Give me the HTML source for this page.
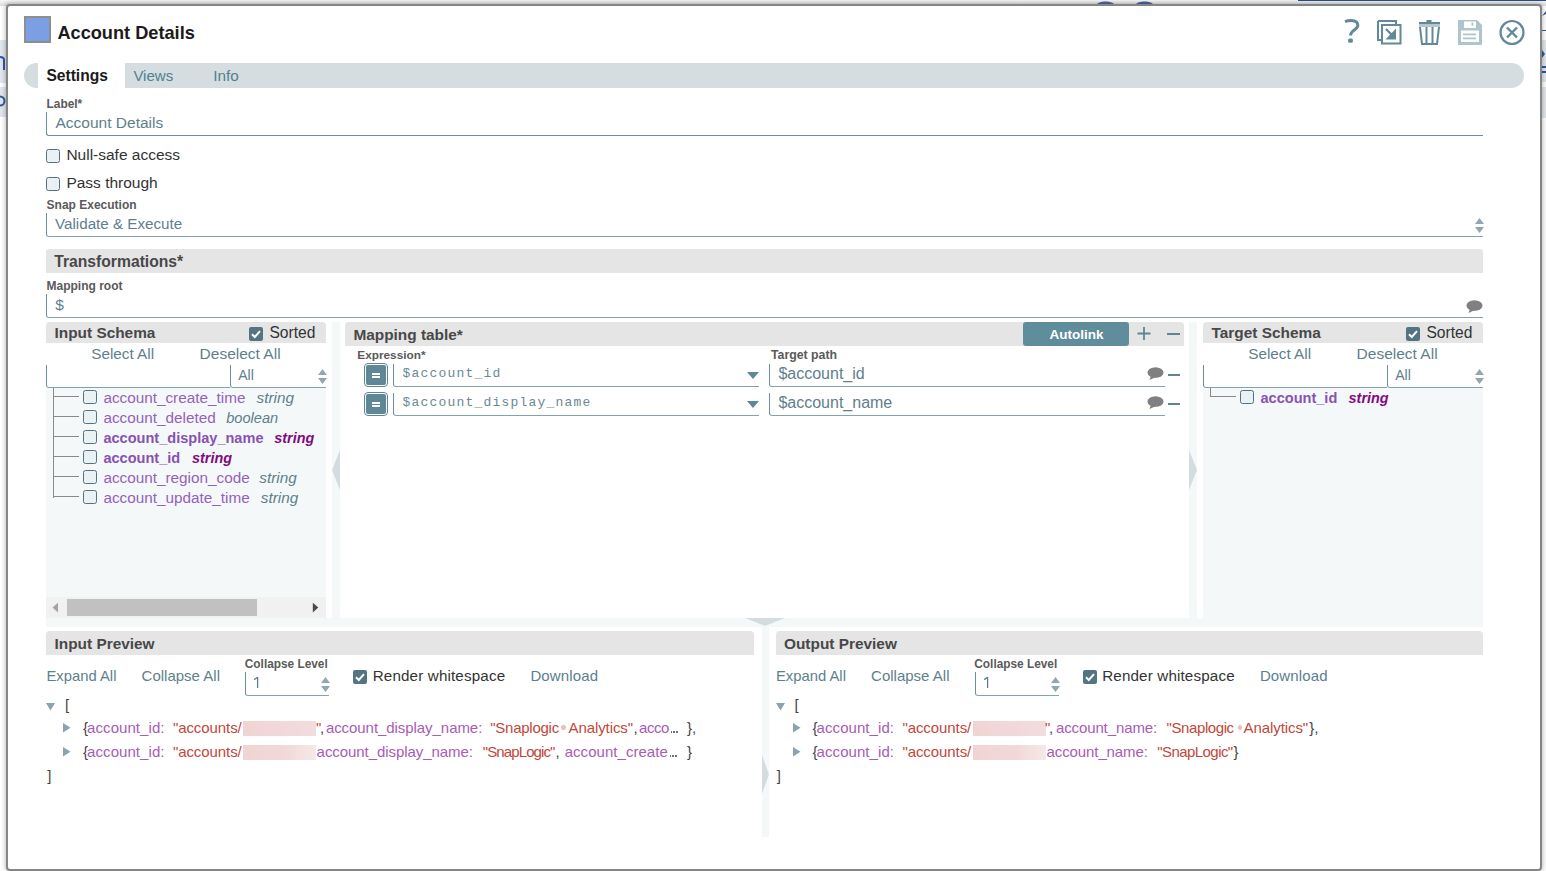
<!DOCTYPE html><html><head><meta charset="utf-8"><style>
html,body{margin:0;padding:0;}
body{width:1546px;height:871px;position:relative;overflow:hidden;background:#ffffff;font-family:"Liberation Sans",sans-serif;}
.t{position:absolute;white-space:pre;line-height:1;}
.r{position:absolute;box-sizing:border-box;}
</style></head><body>
<div class="r" style="left:0px;top:0px;width:1546px;height:6px;background:linear-gradient(#f6f6f6,#dcdcdc)"></div>
<div class="r" style="left:0px;top:40px;width:6px;height:43px;background:#e1e6ec"></div>
<div class="r" style="left:0px;top:87px;width:6px;height:30px;background:#e1e6ec"></div>
<svg class="r" style="left:0px;top:54px;" width="6" height="17" viewBox="0 0 6 17"><path d="M-4 16 V6 C-4 2, 4 2, 4 6 V16" fill="none" stroke="#2a5aa6" stroke-width="2"/></svg>
<svg class="r" style="left:0px;top:92px;" width="6" height="16" viewBox="0 0 6 16"><circle cx="0" cy="9" r="4.5" fill="none" stroke="#2a5aa6" stroke-width="2"/></svg>
<svg class="r" style="left:1094px;top:0px;" width="64" height="6" viewBox="0 0 64 6"><path d="M2 5.5 C4 0, 19 0, 21 5.5Z" fill="#3a4f8e" opacity="0.85"/><path d="M41 5.5 C43 0, 58 0, 60 5.5Z" fill="#27508f" opacity="0.85"/></svg>
<div class="r" style="left:1298px;top:0px;width:248px;height:1px;background:#2c4f8a"></div>
<div class="r" style="left:1542px;top:30px;width:4px;height:1px;background:#2c5aa0"></div>
<div class="r" style="left:1542px;top:40px;width:4px;height:42px;background:#e3e7ec"></div>
<div class="r" style="left:1542px;top:87px;width:4px;height:31px;background:#e3e7ec"></div>
<svg class="r" style="left:1542px;top:11px;" width="4" height="6" viewBox="0 0 4 6"><path d="M0 5 L4 0 V3Z" fill="#2c5aa0"/></svg>
<svg class="r" style="left:1542px;top:50px;" width="4" height="8" viewBox="0 0 4 8"><path d="M0 0 L3 4 L0 8Z" fill="#2c5aa0"/></svg>
<div class="r" style="left:1542px;top:66px;width:4px;height:2px;background:#2c5aa0"></div>
<div class="r" style="left:1542px;top:71px;width:4px;height:2px;background:#2c5aa0"></div>
<div class="r" style="left:6px;top:4px;width:1536px;height:867px;background:#fff;border:2px solid #858585;border-radius:4px;box-shadow:0 0 4px 1px rgba(0,0,0,0.25)"></div>
<div class="r" style="left:24px;top:16px;width:27px;height:27px;background:#7a9fe3;border:2px solid #8e8e8e"></div>
<div class="t" style="left:57.4px;top:24.0px;font-size:18.2px;color:#1b1b1b;font-weight:700;font-style:normal;letter-spacing:0px;font-family:'Liberation Sans', sans-serif;">Account Details</div>
<svg class="r" style="left:1340px;top:15.8px;" width="24" height="30" viewBox="0 0 24 30"><path d="M5 5.6 C8 4.4, 12 4.2, 14.5 5 C17.5 6, 18.2 8.5, 17.6 10.5 C17 12.5, 14 14, 12.5 15.5 C11 17, 10.5 18, 10.5 19.5" fill="none" stroke="#628998" stroke-width="3"/><rect x="8.1" y="22.5" width="4.8" height="4.3" rx="1.6" fill="#628998"/></svg>
<svg class="r" style="left:1376px;top:19px;" width="27" height="27" viewBox="0 0 27 27"><path d="M2 2 H20 V6" fill="none" stroke="#628998" stroke-width="2"/><path d="M2 2 V21 H5" fill="none" stroke="#628998" stroke-width="2"/>
<rect x="6" y="6" width="18.5" height="18.5" fill="none" stroke="#628998" stroke-width="2"/>
<path d="M10 10 L15.5 15.5" stroke="#628998" stroke-width="2.2"/><path d="M20 9.5 V20.5 H9.5 Z" fill="#628998"/></svg>
<svg class="r" style="left:1417px;top:19px;" width="26" height="27" viewBox="0 0 26 27"><rect x="9.5" y="1" width="5" height="3" fill="#628998"/><rect x="2" y="3" width="21" height="2.5" fill="#628998"/><rect x="2" y="5.5" width="21" height="2.5" fill="#b7c8ce"/>
<path d="M3 8 L5 25 H20 L22 8" fill="none" stroke="#628998" stroke-width="2"/><path d="M9.5 8 V24 M15.5 8 V24" stroke="#628998" stroke-width="2"/></svg>
<svg class="r" style="left:1457px;top:19px;" width="27" height="27" viewBox="0 0 27 27"><path d="M1 1 H20 L25 6 V26 H1 Z" fill="#afc4cc"/><rect x="7" y="2.5" width="12" height="6.5" fill="#fff"/><rect x="14.5" y="3.5" width="1.8" height="3.2" fill="#afc4cc"/>
<rect x="4" y="11.5" width="18" height="11.5" fill="#fff"/><rect x="6" y="14.5" width="13" height="1.8" fill="#afc4cc"/><rect x="6" y="18.5" width="13" height="1.8" fill="#afc4cc"/></svg>
<svg class="r" style="left:1498px;top:19px;" width="28" height="28" viewBox="0 0 28 28"><circle cx="14" cy="13.5" r="11.5" fill="none" stroke="#628998" stroke-width="2.2"/><path d="M9 8.5 L19 18.5 M19 8.5 L9 18.5" stroke="#628998" stroke-width="2.4"/></svg>
<div class="r" style="left:24px;top:63px;width:1500px;height:25px;background:#d5dde0;border-radius:12.5px"></div>
<div class="r" style="left:38px;top:63px;width:87px;height:25px;background:#fff"></div>
<div class="t" style="left:46.4px;top:68.0px;font-size:15.6px;color:#1b1b1b;font-weight:700;font-style:normal;letter-spacing:0px;font-family:'Liberation Sans', sans-serif;">Settings</div>
<div class="t" style="left:133.4px;top:68.0px;font-size:15px;color:#4f8093;font-weight:400;font-style:normal;letter-spacing:0px;font-family:'Liberation Sans', sans-serif;">Views</div>
<div class="t" style="left:213.3px;top:68.0px;font-size:15.3px;color:#4f8093;font-weight:400;font-style:normal;letter-spacing:0px;font-family:'Liberation Sans', sans-serif;">Info</div>
<div class="t" style="left:46.5px;top:99.0px;font-size:11.9px;color:#5a5a5a;font-weight:700;font-style:normal;letter-spacing:0px;font-family:'Liberation Sans', sans-serif;">Label*</div>
<div class="r" style="left:46px;top:112px;width:1437px;height:24px;border-left:1px solid #6d8e9a;border-bottom:1px solid #6d8e9a;border-bottom-left-radius:3px"></div>
<div class="t" style="left:55.5px;top:115.0px;font-size:15.5px;color:#5e7f8c;font-weight:400;font-style:normal;letter-spacing:0px;font-family:'Liberation Sans', sans-serif;">Account Details</div>
<div class="r" style="left:46px;top:149px;width:14px;height:14px;background:#e9f1f4;border:1.5px solid #54717d;border-radius:2.5px"></div>
<div class="t" style="left:66.4px;top:147.0px;font-size:15.5px;color:#333;font-weight:400;font-style:normal;letter-spacing:0px;font-family:'Liberation Sans', sans-serif;">Null-safe access</div>
<div class="r" style="left:46px;top:177px;width:14px;height:14px;background:#e9f1f4;border:1.5px solid #54717d;border-radius:2.5px"></div>
<div class="t" style="left:66.4px;top:175.0px;font-size:15.5px;color:#333;font-weight:400;font-style:normal;letter-spacing:0px;font-family:'Liberation Sans', sans-serif;">Pass through</div>
<div class="t" style="left:46.6px;top:199.0px;font-size:12px;color:#5a5a5a;font-weight:700;font-style:normal;letter-spacing:0px;font-family:'Liberation Sans', sans-serif;">Snap Execution</div>
<div class="r" style="left:46px;top:213px;width:1437px;height:24px;border-left:1px solid #6d8e9a;border-bottom:1px solid #86a2ad;border-bottom-left-radius:3px"></div>
<div class="t" style="left:55.0px;top:216.0px;font-size:15.2px;color:#5e7f8c;font-weight:400;font-style:normal;letter-spacing:0px;font-family:'Liberation Sans', sans-serif;">Validate &amp; Execute</div>
<svg class="r" style="left:1474.5px;top:217.5px;" width="9" height="16" viewBox="0 0 9 16"><path d="M4.5 0 L9 6 H0Z M0 9 H9 L4.5 15Z" fill="#8fa8b0"/></svg>
<div class="r" style="left:46px;top:249px;width:1437px;height:24px;background:#e5e5e5;border-radius:3px 3px 0 0"></div>
<div class="t" style="left:54.2px;top:254.0px;font-size:15.7px;color:#484848;font-weight:700;font-style:normal;letter-spacing:0px;font-family:'Liberation Sans', sans-serif;">Transformations*</div>
<div class="t" style="left:46.5px;top:280.0px;font-size:12px;color:#5a5a5a;font-weight:700;font-style:normal;letter-spacing:0px;font-family:'Liberation Sans', sans-serif;">Mapping root</div>
<div class="r" style="left:46px;top:294px;width:1437px;height:24px;border-left:1px solid #6d8e9a;border-bottom:1px solid #86a2ad;border-bottom-left-radius:3px"></div>
<div class="t" style="left:55.3px;top:297.0px;font-size:15.5px;color:#5e7f8c;font-weight:400;font-style:normal;letter-spacing:0px;font-family:'Liberation Sans', sans-serif;">$</div>
<svg class="r" style="left:1466px;top:300px;" width="17" height="14" viewBox="0 0 17 14"><ellipse cx="8.5" cy="5.5" rx="8" ry="5.3" fill="#808080"/><path d="M4 9 L2.5 13 L9 10Z" fill="#808080"/></svg>
<div class="r" style="left:46px;top:322px;width:280px;height:21px;background:#e5e5e5;border-radius:4px 4px 0 0"></div>
<div class="t" style="left:54.5px;top:325.0px;font-size:15.4px;color:#484848;font-weight:700;font-style:normal;letter-spacing:0px;font-family:'Liberation Sans', sans-serif;">Input Schema</div>
<div class="r" style="left:249px;top:327px;width:14px;height:14px;background:#557482;border-radius:2px"></div>
<svg class="r" style="left:249px;top:327px;" width="14" height="14" viewBox="0 0 14 14"><path d="M3 7.2 L5.8 10 L11 4.2" fill="none" stroke="#fff" stroke-width="2"/></svg>
<div class="t" style="left:269.4px;top:325.0px;font-size:15.6px;color:#333;font-weight:400;font-style:normal;letter-spacing:0px;font-family:'Liberation Sans', sans-serif;">Sorted</div>
<div class="t" style="left:91.2px;top:346.0px;font-size:15.3px;color:#5e7f8c;font-weight:400;font-style:normal;letter-spacing:0px;font-family:'Liberation Sans', sans-serif;">Select All</div>
<div class="t" style="left:199.6px;top:346.0px;font-size:15.5px;color:#5e7f8c;font-weight:400;font-style:normal;letter-spacing:0px;font-family:'Liberation Sans', sans-serif;">Deselect All</div>
<div class="r" style="left:46px;top:365px;width:184px;height:23px;border-left:1px solid #6d8e9a;border-bottom:1px solid #86a2ad;border-bottom-left-radius:3px"></div>
<div class="r" style="left:230px;top:365px;width:96px;height:23px;border-left:1px solid #6d8e9a;border-bottom:1px solid #86a2ad;border-bottom-left-radius:3px"></div>
<div class="t" style="left:238.2px;top:368.0px;font-size:14px;color:#5e7f8c;font-weight:400;font-style:normal;letter-spacing:0px;font-family:'Liberation Sans', sans-serif;">All</div>
<svg class="r" style="left:317.5px;top:368.5px;" width="9" height="16" viewBox="0 0 9 16"><path d="M4.5 0 L9 6 H0Z M0 9 H9 L4.5 15Z" fill="#8fa8b0"/></svg>
<div class="r" style="left:46px;top:388px;width:280px;height:230px;background:#f5f8f9"></div>
<div class="r" style="left:1203px;top:322px;width:280px;height:21px;background:#e5e5e5;border-radius:4px 4px 0 0"></div>
<div class="t" style="left:1211.5px;top:325.0px;font-size:15.4px;color:#484848;font-weight:700;font-style:normal;letter-spacing:0px;font-family:'Liberation Sans', sans-serif;">Target Schema</div>
<div class="r" style="left:1406px;top:327px;width:14px;height:14px;background:#557482;border-radius:2px"></div>
<svg class="r" style="left:1406px;top:327px;" width="14" height="14" viewBox="0 0 14 14"><path d="M3 7.2 L5.8 10 L11 4.2" fill="none" stroke="#fff" stroke-width="2"/></svg>
<div class="t" style="left:1426.4px;top:325.0px;font-size:15.6px;color:#333;font-weight:400;font-style:normal;letter-spacing:0px;font-family:'Liberation Sans', sans-serif;">Sorted</div>
<div class="t" style="left:1248.2px;top:346.0px;font-size:15.3px;color:#5e7f8c;font-weight:400;font-style:normal;letter-spacing:0px;font-family:'Liberation Sans', sans-serif;">Select All</div>
<div class="t" style="left:1356.6px;top:346.0px;font-size:15.5px;color:#5e7f8c;font-weight:400;font-style:normal;letter-spacing:0px;font-family:'Liberation Sans', sans-serif;">Deselect All</div>
<div class="r" style="left:1203px;top:365px;width:184px;height:23px;border-left:1px solid #6d8e9a;border-bottom:1px solid #86a2ad;border-bottom-left-radius:3px"></div>
<div class="r" style="left:1387px;top:365px;width:96px;height:23px;border-left:1px solid #6d8e9a;border-bottom:1px solid #86a2ad;border-bottom-left-radius:3px"></div>
<div class="t" style="left:1395.2px;top:368.0px;font-size:14px;color:#5e7f8c;font-weight:400;font-style:normal;letter-spacing:0px;font-family:'Liberation Sans', sans-serif;">All</div>
<svg class="r" style="left:1474.5px;top:368.5px;" width="9" height="16" viewBox="0 0 9 16"><path d="M4.5 0 L9 6 H0Z M0 9 H9 L4.5 15Z" fill="#8fa8b0"/></svg>
<div class="r" style="left:1203px;top:388px;width:280px;height:230px;background:#f5f8f9"></div>
<div class="r" style="left:53px;top:388px;width:1px;height:110px;background:#8a8a8a"></div>
<div class="r" style="left:53px;top:396px;width:26px;height:1px;background:#8a8a8a"></div>
<div class="r" style="left:83px;top:390px;width:14px;height:14px;background:#e9f1f4;border:1.5px solid #54717d;border-radius:2.5px"></div>
<div class="t" style="left:103.4px;top:390.0px;font-size:15.3px;color:#9462b9;font-weight:400;font-style:normal;letter-spacing:0px;font-family:'Liberation Sans', sans-serif;">account_create_time</div>
<div class="t" style="left:256.5px;top:390.0px;font-size:15.3px;color:#5e7f8c;font-weight:400;font-style:italic;letter-spacing:0px;font-family:'Liberation Sans', sans-serif;">string</div>
<div class="r" style="left:53px;top:416px;width:26px;height:1px;background:#8a8a8a"></div>
<div class="r" style="left:83px;top:410px;width:14px;height:14px;background:#e9f1f4;border:1.5px solid #54717d;border-radius:2.5px"></div>
<div class="t" style="left:103.4px;top:410.0px;font-size:15.3px;color:#9462b9;font-weight:400;font-style:normal;letter-spacing:0px;font-family:'Liberation Sans', sans-serif;">account_deleted</div>
<div class="t" style="left:226.2px;top:411.0px;font-size:14.6px;color:#5e7f8c;font-weight:400;font-style:italic;letter-spacing:0px;font-family:'Liberation Sans', sans-serif;">boolean</div>
<div class="r" style="left:53px;top:436px;width:26px;height:1px;background:#8a8a8a"></div>
<div class="r" style="left:83px;top:430px;width:14px;height:14px;background:#e9f1f4;border:1.5px solid #54717d;border-radius:2.5px"></div>
<div class="t" style="left:103.4px;top:431.0px;font-size:14.55px;color:#8753b1;font-weight:700;font-style:normal;letter-spacing:0px;font-family:'Liberation Sans', sans-serif;">account_display_name</div>
<div class="t" style="left:274.3px;top:431.0px;font-size:14.4px;color:#820a82;font-weight:700;font-style:italic;letter-spacing:0px;font-family:'Liberation Sans', sans-serif;">string</div>
<div class="r" style="left:53px;top:456px;width:26px;height:1px;background:#8a8a8a"></div>
<div class="r" style="left:83px;top:450px;width:14px;height:14px;background:#e9f1f4;border:1.5px solid #54717d;border-radius:2.5px"></div>
<div class="t" style="left:103.4px;top:451.0px;font-size:14.55px;color:#8753b1;font-weight:700;font-style:normal;letter-spacing:0px;font-family:'Liberation Sans', sans-serif;">account_id</div>
<div class="t" style="left:192.0px;top:451.0px;font-size:14.4px;color:#820a82;font-weight:700;font-style:italic;letter-spacing:0px;font-family:'Liberation Sans', sans-serif;">string</div>
<div class="r" style="left:53px;top:476px;width:26px;height:1px;background:#8a8a8a"></div>
<div class="r" style="left:83px;top:470px;width:14px;height:14px;background:#e9f1f4;border:1.5px solid #54717d;border-radius:2.5px"></div>
<div class="t" style="left:103.4px;top:470.0px;font-size:15.3px;color:#9462b9;font-weight:400;font-style:normal;letter-spacing:0px;font-family:'Liberation Sans', sans-serif;">account_region_code</div>
<div class="t" style="left:259.3px;top:470.0px;font-size:15.3px;color:#5e7f8c;font-weight:400;font-style:italic;letter-spacing:0px;font-family:'Liberation Sans', sans-serif;">string</div>
<div class="r" style="left:53px;top:496px;width:26px;height:1px;background:#8a8a8a"></div>
<div class="r" style="left:83px;top:490px;width:14px;height:14px;background:#e9f1f4;border:1.5px solid #54717d;border-radius:2.5px"></div>
<div class="t" style="left:103.4px;top:490.0px;font-size:15.3px;color:#9462b9;font-weight:400;font-style:normal;letter-spacing:0px;font-family:'Liberation Sans', sans-serif;">account_update_time</div>
<div class="t" style="left:260.8px;top:490.0px;font-size:15.3px;color:#5e7f8c;font-weight:400;font-style:italic;letter-spacing:0px;font-family:'Liberation Sans', sans-serif;">string</div>
<div class="r" style="left:46px;top:597px;width:280px;height:21px;background:#f1f1f1"></div>
<div class="r" style="left:67px;top:599px;width:190px;height:17px;background:#c1c1c1"></div>
<svg class="r" style="left:52px;top:602px;" width="7" height="11" viewBox="0 0 7 11"><path d="M6 0.7 V10.5 L0.5 5.6Z" fill="#a3a3a3"/></svg>
<svg class="r" style="left:312px;top:602px;" width="7" height="11" viewBox="0 0 7 11"><path d="M0.8 0.7 V10.5 L6.3 5.6Z" fill="#4a4a4a"/></svg>
<div class="r" style="left:1210px;top:388px;width:1px;height:9px;background:#8a8a8a"></div>
<div class="r" style="left:1210px;top:396px;width:26px;height:1px;background:#8a8a8a"></div>
<div class="r" style="left:1240px;top:390px;width:14px;height:14px;background:#e9f1f4;border:1.5px solid #54717d;border-radius:2.5px"></div>
<div class="t" style="left:1260.5px;top:391.0px;font-size:14.55px;color:#8753b1;font-weight:700;font-style:normal;letter-spacing:0px;font-family:'Liberation Sans', sans-serif;">account_id</div>
<div class="t" style="left:1348.6px;top:391.0px;font-size:14.4px;color:#820a82;font-weight:700;font-style:italic;letter-spacing:0px;font-family:'Liberation Sans', sans-serif;">string</div>
<div class="r" style="left:332px;top:322px;width:8px;height:296px;background:#f5f8f9"></div>
<svg class="r" style="left:332px;top:450px;" width="8" height="40" viewBox="0 0 8 40"><path d="M8 0 V40 L0 20Z" fill="#d3dcdf"/></svg>
<div class="r" style="left:1189px;top:322px;width:8px;height:296px;background:#f5f8f9"></div>
<svg class="r" style="left:1189px;top:450px;" width="8" height="40" viewBox="0 0 8 40"><path d="M0 0 V40 L8 20Z" fill="#d3dcdf"/></svg>
<div class="r" style="left:46px;top:618px;width:1437px;height:9px;background:#f5f8f9"></div>
<svg class="r" style="left:745px;top:618px;" width="40" height="8" viewBox="0 0 40 8"><path d="M0 0 H40 L20 8Z" fill="#d3dcdf"/></svg>
<div class="r" style="left:345px;top:322px;width:839px;height:24px;background:#e5e5e5;border-radius:4px 4px 0 0"></div>
<div class="t" style="left:353.4px;top:327.0px;font-size:15.4px;color:#484848;font-weight:700;font-style:normal;letter-spacing:0px;font-family:'Liberation Sans', sans-serif;">Mapping table*</div>
<div class="r" style="left:1023px;top:322px;width:106px;height:24px;background:#5f8d9b;border-radius:3px"></div>
<div class="t" style="left:1049.5px;top:328.0px;font-size:13.5px;color:#fff;font-weight:700;font-style:normal;letter-spacing:0px;font-family:'Liberation Sans', sans-serif;">Autolink</div>
<svg class="r" style="left:1137px;top:327px;" width="14" height="14" viewBox="0 0 14 14"><path d="M7 0 V13 M0.5 6.5 H13.5" stroke="#5f8593" stroke-width="1.8"/></svg>
<div class="r" style="left:1167px;top:333px;width:13px;height:2px;background:#5f8593"></div>
<div class="t" style="left:357.3px;top:350.0px;font-size:11.8px;color:#5a5a5a;font-weight:700;font-style:normal;letter-spacing:0px;font-family:'Liberation Sans', sans-serif;">Expression*</div>
<div class="t" style="left:771.0px;top:349.0px;font-size:12.3px;color:#5a5a5a;font-weight:700;font-style:normal;letter-spacing:0px;font-family:'Liberation Sans', sans-serif;">Target path</div>
<div class="r" style="left:364px;top:363px;width:24px;height:24px;border:1px solid #5f8796;border-radius:4px;background:#fff"></div>
<div class="r" style="left:366px;top:365px;width:20px;height:20px;background:#5f8796;border-radius:2px"></div>
<div class="r" style="left:372px;top:373px;width:8px;height:2px;background:#fff"></div>
<div class="r" style="left:372px;top:376.4px;width:8px;height:2px;background:#fff"></div>
<div class="r" style="left:393px;top:364px;width:366px;height:23px;border-left:1px solid #6d8e9a;border-bottom:1px solid #86a2ad;border-bottom-left-radius:3px"></div>
<div class="t" style="left:402.5px;top:367.0px;font-size:13px;color:#6a8994;font-weight:400;font-style:normal;letter-spacing:1.2px;font-family:'Liberation Mono', monospace;">$account_id</div>
<svg class="r" style="left:747px;top:372px;" width="12" height="7" viewBox="0 0 12 7"><path d="M0 0 H12 L6 7Z" fill="#5f8796"/></svg>
<div class="r" style="left:769px;top:364px;width:396px;height:23px;border-left:1px solid #6d8e9a;border-bottom:1px solid #86a2ad;border-bottom-left-radius:3px"></div>
<div class="t" style="left:778.4px;top:366.0px;font-size:16px;color:#5e7f8c;font-weight:400;font-style:normal;letter-spacing:0px;font-family:'Liberation Sans', sans-serif;">$account_id</div>
<svg class="r" style="left:1147px;top:367px;" width="17" height="14" viewBox="0 0 17 14"><ellipse cx="8.5" cy="5.5" rx="8" ry="5.3" fill="#808080"/><path d="M4 9 L2.5 13 L9 10Z" fill="#808080"/></svg>
<div class="r" style="left:1168px;top:374px;width:12px;height:2px;background:#5f8593"></div>
<div class="r" style="left:364px;top:392px;width:24px;height:24px;border:1px solid #5f8796;border-radius:4px;background:#fff"></div>
<div class="r" style="left:366px;top:394px;width:20px;height:20px;background:#5f8796;border-radius:2px"></div>
<div class="r" style="left:372px;top:402px;width:8px;height:2px;background:#fff"></div>
<div class="r" style="left:372px;top:405.4px;width:8px;height:2px;background:#fff"></div>
<div class="r" style="left:393px;top:393px;width:366px;height:23px;border-left:1px solid #6d8e9a;border-bottom:1px solid #86a2ad;border-bottom-left-radius:3px"></div>
<div class="t" style="left:402.5px;top:396.0px;font-size:13px;color:#6a8994;font-weight:400;font-style:normal;letter-spacing:1.2px;font-family:'Liberation Mono', monospace;">$account_display_name</div>
<svg class="r" style="left:747px;top:401px;" width="12" height="7" viewBox="0 0 12 7"><path d="M0 0 H12 L6 7Z" fill="#5f8796"/></svg>
<div class="r" style="left:769px;top:393px;width:396px;height:23px;border-left:1px solid #6d8e9a;border-bottom:1px solid #86a2ad;border-bottom-left-radius:3px"></div>
<div class="t" style="left:778.4px;top:395.0px;font-size:16px;color:#5e7f8c;font-weight:400;font-style:normal;letter-spacing:0px;font-family:'Liberation Sans', sans-serif;">$account_name</div>
<svg class="r" style="left:1147px;top:396px;" width="17" height="14" viewBox="0 0 17 14"><ellipse cx="8.5" cy="5.5" rx="8" ry="5.3" fill="#808080"/><path d="M4 9 L2.5 13 L9 10Z" fill="#808080"/></svg>
<div class="r" style="left:1168px;top:403px;width:12px;height:2px;background:#5f8593"></div>
<div class="r" style="left:762px;top:627px;width:7px;height:210px;background:#f5f8f9"></div>
<svg class="r" style="left:762px;top:755px;" width="7" height="39" viewBox="0 0 7 39"><path d="M0 0 L7 19.5 L0 39Z" fill="#d3dcdf"/></svg>
<div class="r" style="left:46px;top:631px;width:708px;height:24px;background:#e5e5e5;border-radius:4px 4px 0 0"></div>
<div class="t" style="left:54.5px;top:636.0px;font-size:15.4px;color:#484848;font-weight:700;font-style:normal;letter-spacing:0px;font-family:'Liberation Sans', sans-serif;">Input Preview</div>
<div class="t" style="left:46.5px;top:669.0px;font-size:14.8px;color:#5e7f8c;font-weight:400;font-style:normal;letter-spacing:0px;font-family:'Liberation Sans', sans-serif;">Expand All</div>
<div class="t" style="left:141.6px;top:668.0px;font-size:15px;color:#5e7f8c;font-weight:400;font-style:normal;letter-spacing:0px;font-family:'Liberation Sans', sans-serif;">Collapse All</div>
<div class="t" style="left:244.8px;top:659.0px;font-size:11.85px;color:#5a5a5a;font-weight:700;font-style:normal;letter-spacing:0px;font-family:'Liberation Sans', sans-serif;">Collapse Level</div>
<div class="r" style="left:245px;top:672px;width:84px;height:24px;border-left:1px solid #6d8e9a;border-bottom:1px solid #86a2ad;border-bottom-left-radius:3px"></div>
<svg class="r" style="left:253px;top:676px;" width="6" height="13" viewBox="0 0 6 13"><path d="M4.6 1 V12" stroke="#5e7f8c" stroke-width="1.3"/><path d="M1.2 3.6 L4.6 1.2" stroke="#5e7f8c" stroke-width="1.3"/></svg>
<svg class="r" style="left:321px;top:676.5px;" width="9" height="16" viewBox="0 0 9 16"><path d="M4.5 0 L9 6 H0Z M0 9 H9 L4.5 15Z" fill="#8fa8b0"/></svg>
<div class="r" style="left:353px;top:670px;width:14px;height:14px;background:#557482;border-radius:2px"></div>
<svg class="r" style="left:353px;top:670px;" width="14" height="14" viewBox="0 0 14 14"><path d="M3 7.2 L5.8 10 L11 4.2" fill="none" stroke="#fff" stroke-width="2"/></svg>
<div class="t" style="left:372.7px;top:668.0px;font-size:15.2px;color:#333;font-weight:400;font-style:normal;letter-spacing:0.149px;font-family:'Liberation Sans', sans-serif;">Render whitespace</div>
<div class="t" style="left:530.4px;top:668.0px;font-size:15px;color:#5a8091;font-weight:400;font-style:normal;letter-spacing:0.141px;font-family:'Liberation Sans', sans-serif;">Download</div>
<svg class="r" style="left:46px;top:703px;" width="9" height="8" viewBox="0 0 9 8"><path d="M0 0 H9 L4.5 7.5Z" fill="#8aa3ac"/></svg>
<div class="t" style="left:65.0px;top:697.0px;font-size:15px;color:#444;font-weight:400;font-style:normal;letter-spacing:0px;font-family:'Liberation Sans', sans-serif;">[</div>
<div class="t" style="left:47.2px;top:768.0px;font-size:15px;color:#444;font-weight:400;font-style:normal;letter-spacing:0px;font-family:'Liberation Sans', sans-serif;">]</div>
<svg class="r" style="left:63px;top:723.0px;" width="8" height="10" viewBox="0 0 8 10"><path d="M0 0 V9.5 L7.5 4.75Z" fill="#8aa3ac"/></svg>
<div class="t" style="left:82.9px;top:720.0px;font-size:15px;color:#444;font-weight:400;font-style:normal;letter-spacing:0px;font-family:'Liberation Sans', sans-serif;">{</div>
<div class="t" style="left:87.1px;top:720.0px;font-size:15px;color:#a75cb5;font-weight:400;font-style:normal;letter-spacing:0.068px;font-family:'Liberation Sans', sans-serif;">account_id:</div>
<div class="t" style="left:172.9px;top:720.0px;font-size:15px;color:#c2473a;font-weight:400;font-style:normal;letter-spacing:-0.07px;font-family:'Liberation Sans', sans-serif;">"accounts/</div>
<div class="r" style="left:243px;top:721.0px;width:73px;height:15px;background:linear-gradient(90deg,#f0d4d4,#f1d9d9 60%,#f2dcdc)"></div>
<svg class="r" style="left:63px;top:747.3px;" width="8" height="10" viewBox="0 0 8 10"><path d="M0 0 V9.5 L7.5 4.75Z" fill="#8aa3ac"/></svg>
<div class="t" style="left:82.9px;top:744.0px;font-size:15px;color:#444;font-weight:400;font-style:normal;letter-spacing:0px;font-family:'Liberation Sans', sans-serif;">{</div>
<div class="t" style="left:87.1px;top:744.0px;font-size:15px;color:#a75cb5;font-weight:400;font-style:normal;letter-spacing:0.068px;font-family:'Liberation Sans', sans-serif;">account_id:</div>
<div class="t" style="left:172.9px;top:744.0px;font-size:15px;color:#c2473a;font-weight:400;font-style:normal;letter-spacing:-0.07px;font-family:'Liberation Sans', sans-serif;">"accounts/</div>
<div class="r" style="left:243px;top:745.2px;width:73px;height:15px;background:linear-gradient(90deg,#f0d4d4,#f1d9d9 60%,#f6e9e9)"></div>
<div class="r" style="left:775.5px;top:631px;width:707px;height:24px;background:#e5e5e5;border-radius:4px 4px 0 0"></div>
<div class="t" style="left:784.0px;top:636.0px;font-size:15.4px;color:#484848;font-weight:700;font-style:normal;letter-spacing:0px;font-family:'Liberation Sans', sans-serif;">Output Preview</div>
<div class="t" style="left:776.0px;top:669.0px;font-size:14.8px;color:#5e7f8c;font-weight:400;font-style:normal;letter-spacing:0px;font-family:'Liberation Sans', sans-serif;">Expand All</div>
<div class="t" style="left:871.1px;top:668.0px;font-size:15px;color:#5e7f8c;font-weight:400;font-style:normal;letter-spacing:0px;font-family:'Liberation Sans', sans-serif;">Collapse All</div>
<div class="t" style="left:974.3px;top:659.0px;font-size:11.85px;color:#5a5a5a;font-weight:700;font-style:normal;letter-spacing:0px;font-family:'Liberation Sans', sans-serif;">Collapse Level</div>
<div class="r" style="left:974.5px;top:672px;width:84px;height:24px;border-left:1px solid #6d8e9a;border-bottom:1px solid #86a2ad;border-bottom-left-radius:3px"></div>
<svg class="r" style="left:982.5px;top:676px;" width="6" height="13" viewBox="0 0 6 13"><path d="M4.6 1 V12" stroke="#5e7f8c" stroke-width="1.3"/><path d="M1.2 3.6 L4.6 1.2" stroke="#5e7f8c" stroke-width="1.3"/></svg>
<svg class="r" style="left:1050.5px;top:676.5px;" width="9" height="16" viewBox="0 0 9 16"><path d="M4.5 0 L9 6 H0Z M0 9 H9 L4.5 15Z" fill="#8fa8b0"/></svg>
<div class="r" style="left:1082.5px;top:670px;width:14px;height:14px;background:#557482;border-radius:2px"></div>
<svg class="r" style="left:1082.5px;top:670px;" width="14" height="14" viewBox="0 0 14 14"><path d="M3 7.2 L5.8 10 L11 4.2" fill="none" stroke="#fff" stroke-width="2"/></svg>
<div class="t" style="left:1102.2px;top:668.0px;font-size:15.2px;color:#333;font-weight:400;font-style:normal;letter-spacing:0.149px;font-family:'Liberation Sans', sans-serif;">Render whitespace</div>
<div class="t" style="left:1259.9px;top:668.0px;font-size:15px;color:#5a8091;font-weight:400;font-style:normal;letter-spacing:0.141px;font-family:'Liberation Sans', sans-serif;">Download</div>
<svg class="r" style="left:775.5px;top:703px;" width="9" height="8" viewBox="0 0 9 8"><path d="M0 0 H9 L4.5 7.5Z" fill="#8aa3ac"/></svg>
<div class="t" style="left:794.5px;top:697.0px;font-size:15px;color:#444;font-weight:400;font-style:normal;letter-spacing:0px;font-family:'Liberation Sans', sans-serif;">[</div>
<div class="t" style="left:776.7px;top:768.0px;font-size:15px;color:#444;font-weight:400;font-style:normal;letter-spacing:0px;font-family:'Liberation Sans', sans-serif;">]</div>
<svg class="r" style="left:792.5px;top:723.0px;" width="8" height="10" viewBox="0 0 8 10"><path d="M0 0 V9.5 L7.5 4.75Z" fill="#8aa3ac"/></svg>
<div class="t" style="left:812.4px;top:720.0px;font-size:15px;color:#444;font-weight:400;font-style:normal;letter-spacing:0px;font-family:'Liberation Sans', sans-serif;">{</div>
<div class="t" style="left:816.6px;top:720.0px;font-size:15px;color:#a75cb5;font-weight:400;font-style:normal;letter-spacing:0.068px;font-family:'Liberation Sans', sans-serif;">account_id:</div>
<div class="t" style="left:902.4px;top:720.0px;font-size:15px;color:#c2473a;font-weight:400;font-style:normal;letter-spacing:-0.07px;font-family:'Liberation Sans', sans-serif;">"accounts/</div>
<div class="r" style="left:972.5px;top:721.0px;width:73px;height:15px;background:linear-gradient(90deg,#f0d4d4,#f1d9d9 60%,#f2dcdc)"></div>
<svg class="r" style="left:792.5px;top:747.3px;" width="8" height="10" viewBox="0 0 8 10"><path d="M0 0 V9.5 L7.5 4.75Z" fill="#8aa3ac"/></svg>
<div class="t" style="left:812.4px;top:744.0px;font-size:15px;color:#444;font-weight:400;font-style:normal;letter-spacing:0px;font-family:'Liberation Sans', sans-serif;">{</div>
<div class="t" style="left:816.6px;top:744.0px;font-size:15px;color:#a75cb5;font-weight:400;font-style:normal;letter-spacing:0.068px;font-family:'Liberation Sans', sans-serif;">account_id:</div>
<div class="t" style="left:902.4px;top:744.0px;font-size:15px;color:#c2473a;font-weight:400;font-style:normal;letter-spacing:-0.07px;font-family:'Liberation Sans', sans-serif;">"accounts/</div>
<div class="r" style="left:972.5px;top:745.2px;width:73px;height:15px;background:linear-gradient(90deg,#f0d4d4,#f1d9d9 60%,#f6e9e9)"></div>
<div class="t" style="left:316.0px;top:720.0px;font-size:15px;color:#c2473a;font-weight:400;font-style:normal;letter-spacing:0px;font-family:'Liberation Sans', sans-serif;">"</div>
<div class="t" style="left:320.0px;top:720.0px;font-size:15px;color:#444;font-weight:400;font-style:normal;letter-spacing:0px;font-family:'Liberation Sans', sans-serif;">,</div>
<div class="t" style="left:325.9px;top:720.0px;font-size:15px;color:#a75cb5;font-weight:400;font-style:normal;letter-spacing:-0.06px;font-family:'Liberation Sans', sans-serif;">account_display_name:</div>
<div class="t" style="left:490.3px;top:720.0px;font-size:15px;color:#c2473a;font-weight:400;font-style:normal;letter-spacing:-0.257px;font-family:'Liberation Sans', sans-serif;">"Snaplogic</div>
<div class="r" style="left:561.4px;top:725.3px;width:4.5px;height:4.5px;background:#ebbcbc;border-radius:50%"></div>
<div class="t" style="left:568.6px;top:720.0px;font-size:15px;color:#c2473a;font-weight:400;font-style:normal;letter-spacing:-0.105px;font-family:'Liberation Sans', sans-serif;">Analytics"</div>
<div class="t" style="left:633.5px;top:720.0px;font-size:15px;color:#444;font-weight:400;font-style:normal;letter-spacing:0px;font-family:'Liberation Sans', sans-serif;">,</div>
<div class="t" style="left:639.1px;top:720.0px;font-size:15px;color:#a75cb5;font-weight:400;font-style:normal;letter-spacing:-0.495px;font-family:'Liberation Sans', sans-serif;">acco</div>
<div class="r" style="left:670.5px;top:731px;width:1.5px;height:1.5px;background:#707070"></div>
<div class="r" style="left:673.4px;top:731px;width:1.5px;height:1.5px;background:#707070"></div>
<div class="r" style="left:676.3px;top:731px;width:1.5px;height:1.5px;background:#707070"></div>
<div class="t" style="left:687.0px;top:720.0px;font-size:15px;color:#444;font-weight:400;font-style:normal;letter-spacing:0px;font-family:'Liberation Sans', sans-serif;">},</div>
<div class="t" style="left:316.6px;top:744.0px;font-size:15px;color:#a75cb5;font-weight:400;font-style:normal;letter-spacing:-0.06px;font-family:'Liberation Sans', sans-serif;">account_display_name:</div>
<div class="t" style="left:482.8px;top:744.0px;font-size:15px;color:#c2473a;font-weight:400;font-style:normal;letter-spacing:-0.894px;font-family:'Liberation Sans', sans-serif;">"SnapLogic"</div>
<div class="t" style="left:555.6px;top:744.0px;font-size:15px;color:#444;font-weight:400;font-style:normal;letter-spacing:0px;font-family:'Liberation Sans', sans-serif;">,</div>
<div class="t" style="left:564.7px;top:744.0px;font-size:15px;color:#a75cb5;font-weight:400;font-style:normal;letter-spacing:0.041px;font-family:'Liberation Sans', sans-serif;">account_create</div>
<div class="r" style="left:669.5px;top:755px;width:1.5px;height:1.5px;background:#707070"></div>
<div class="r" style="left:672.4px;top:755px;width:1.5px;height:1.5px;background:#707070"></div>
<div class="r" style="left:675.3px;top:755px;width:1.5px;height:1.5px;background:#707070"></div>
<div class="t" style="left:687.0px;top:744.0px;font-size:15px;color:#444;font-weight:400;font-style:normal;letter-spacing:0px;font-family:'Liberation Sans', sans-serif;">}</div>
<div class="t" style="left:1045.0px;top:720.0px;font-size:15px;color:#c2473a;font-weight:400;font-style:normal;letter-spacing:0px;font-family:'Liberation Sans', sans-serif;">"</div>
<div class="t" style="left:1049.0px;top:720.0px;font-size:15px;color:#444;font-weight:400;font-style:normal;letter-spacing:0px;font-family:'Liberation Sans', sans-serif;">,</div>
<div class="t" style="left:1055.9px;top:720.0px;font-size:15px;color:#a75cb5;font-weight:400;font-style:normal;letter-spacing:-0.106px;font-family:'Liberation Sans', sans-serif;">account_name:</div>
<div class="t" style="left:1166.6px;top:720.0px;font-size:15px;color:#c2473a;font-weight:400;font-style:normal;letter-spacing:-0.412px;font-family:'Liberation Sans', sans-serif;">"Snaplogic</div>
<div class="r" style="left:1237.6px;top:725.3px;width:4.5px;height:4.5px;background:#ebbcbc;border-radius:50%"></div>
<div class="t" style="left:1243.5px;top:720.0px;font-size:15px;color:#c2473a;font-weight:400;font-style:normal;letter-spacing:-0.072px;font-family:'Liberation Sans', sans-serif;">Analytics"</div>
<div class="t" style="left:1309.2px;top:720.0px;font-size:15px;color:#444;font-weight:400;font-style:normal;letter-spacing:0px;font-family:'Liberation Sans', sans-serif;">},</div>
<div class="t" style="left:1046.6px;top:744.0px;font-size:15px;color:#a75cb5;font-weight:400;font-style:normal;letter-spacing:-0.106px;font-family:'Liberation Sans', sans-serif;">account_name:</div>
<div class="t" style="left:1157.2px;top:744.0px;font-size:15px;color:#c2473a;font-weight:400;font-style:normal;letter-spacing:-0.554px;font-family:'Liberation Sans', sans-serif;">"SnapLogic"</div>
<div class="t" style="left:1233.5px;top:744.0px;font-size:15px;color:#444;font-weight:400;font-style:normal;letter-spacing:0px;font-family:'Liberation Sans', sans-serif;">}</div>
</body></html>
